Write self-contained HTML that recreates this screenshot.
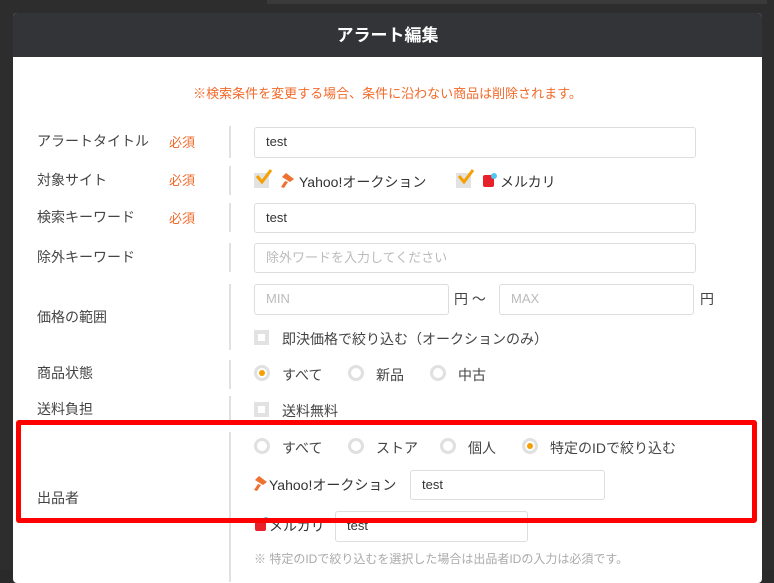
<html><head><style>
body{margin:0;width:774px;height:570px;overflow:hidden;background:#2a2a2a;font-family:"Liberation Sans","Noto Sans CJK JP",sans-serif;position:relative;font-size:14px;color:#444}
.a{position:absolute}
.m{left:13px;top:13px;width:749px;height:570px;background:#fff;border-radius:4px;overflow:hidden}
.h{left:0;top:0;width:749px;height:44px;background:#333438;color:#fff;font-weight:bold;font-size:17px;text-align:center;line-height:46px}
.l{left:24px;line-height:16px}
.r{left:156px;color:#f26a2a;font-size:13px}
.v{left:216px;width:2px;background:#e0e0e0}
.i{border:1px solid #ddd;border-radius:3px;height:29px;box-sizing:border-box;line-height:27px;padding-left:11px;font-size:13px;color:#333}
.ph{color:#bbb}
.cb{width:15px;height:15px;background:#e2e2e2;box-sizing:border-box;border:2px solid #e2e2e2}
.cb::after{content:"";position:absolute;left:2px;top:2px;width:7px;height:7px;background:#fff}
.ck{width:15px;height:15px;background:#e2e2e2}
.rd{width:16px;height:16px;border:3px solid #e0e0e0;border-radius:50%;box-sizing:border-box;background:#fff}
.on::after{content:"";position:absolute;left:2px;top:2px;width:6px;height:6px;border-radius:50%;background:#f5a000}
</style></head><body>
<div class="a" style="left:0;top:0;width:774px;height:570px;background:#2d2d2d"></div>
<div class="a" style="left:267px;top:0;width:500px;height:4px;background:#3a3a3a"></div>
<div class="a m">
<div class="a h">アラート編集</div>
<div class="a" style="left:0;top:70px;width:749px;text-align:center;color:#f26a2a;font-size:13px">※検索条件を変更する場合、条件に沿わない商品は削除されます。</div>

<div class="a l" style="top:120px">アラートタイトル</div><div class="a r" style="top:119px">必須</div>
<div class="a v" style="top:113px;height:32px"></div>
<div class="a i" style="left:241px;top:114px;width:442px;height:31px">test</div>

<div class="a l" style="top:159px">対象サイト</div><div class="a r" style="top:157px">必須</div>
<div class="a v" style="top:153px;height:29px"></div>
<div class="a ck" style="left:241px;top:160px"></div>
<svg class="a" style="left:241px;top:155px" width="20" height="20"><path d="M3 8 L8 14 L17 2" stroke="#f5a000" stroke-width="3" fill="none"/></svg>
<svg class="a" style="left:268px;top:160px" width="14" height="15"><path d="M5 0 L13 6 L9 9 L1 4Z M4 8 L0 14 L3 15 L7 9Z" fill="#f07030"/></svg>
<div class="a" style="left:286px;top:159px;color:#333">Yahoo!オークション</div>
<div class="a ck" style="left:443px;top:160px"></div>
<svg class="a" style="left:443px;top:155px" width="20" height="20"><path d="M3 8 L8 14 L17 2" stroke="#f5a000" stroke-width="3" fill="none"/></svg>
<svg class="a" style="left:469px;top:159px" width="16" height="16"><rect x="1" y="3" width="11" height="12" rx="2" fill="#e8202a"/><circle cx="12" cy="4" r="3" fill="#4ac8f0"/></svg>
<div class="a" style="left:487px;top:159px;color:#333">メルカリ</div>

<div class="a l" style="top:196px">検索キーワード</div><div class="a r" style="top:195px">必須</div>
<div class="a v" style="top:190px;height:29px"></div>
<div class="a i" style="left:241px;top:190px;width:442px;height:30px">test</div>

<div class="a l" style="top:236px">除外キーワード</div>
<div class="a v" style="top:230px;height:29px"></div>
<div class="a i ph" style="left:241px;top:230px;width:442px;height:30px">除外ワードを入力してください</div>

<div class="a l" style="top:296px">価格の範囲</div>
<div class="a v" style="top:271px;height:66px"></div>
<div class="a i ph" style="left:241px;top:271px;width:195px;height:31px">MIN</div>
<div class="a" style="left:441px;top:276px">円 ～</div>
<div class="a i ph" style="left:486px;top:271px;width:195px;height:31px">MAX</div>
<div class="a" style="left:687px;top:276px">円</div>
<div class="a cb" style="left:241px;top:317px"></div>
<div class="a" style="left:269px;top:316px">即決価格で絞り込む（オークションのみ）</div>

<div class="a l" style="top:352px">商品状態</div>
<div class="a v" style="top:347px;height:29px"></div>
<div class="a rd on" style="left:241px;top:352px"></div><div class="a" style="left:269px;top:352px">すべて</div>
<div class="a rd" style="left:335px;top:352px"></div><div class="a" style="left:363px;top:352px">新品</div>
<div class="a rd" style="left:417px;top:352px"></div><div class="a" style="left:445px;top:352px">中古</div>

<div class="a l" style="top:388px">送料負担</div>
<div class="a v" style="top:383px;height:25px"></div>
<div class="a cb" style="left:241px;top:389px"></div><div class="a" style="left:269px;top:388px">送料無料</div>

<div class="a l" style="top:477px">出品者</div>
<div class="a v" style="top:419px;height:150px"></div>
<div class="a rd" style="left:241px;top:425px"></div><div class="a" style="left:269px;top:425px">すべて</div>
<div class="a rd" style="left:335px;top:425px"></div><div class="a" style="left:363px;top:425px">ストア</div>
<div class="a rd" style="left:427px;top:425px"></div><div class="a" style="left:455px;top:425px">個人</div>
<div class="a rd on" style="left:509px;top:425px"></div><div class="a" style="left:537px;top:425px">特定のIDで絞り込む</div>
<svg class="a" style="left:241px;top:463px" width="14" height="15"><path d="M5 0 L13 6 L9 9 L1 4Z M4 8 L0 14 L3 15 L7 9Z" fill="#f07030"/></svg>
<div class="a" style="left:256px;top:462px;color:#333">Yahoo!オークション</div>
<div class="a i" style="left:397px;top:457px;width:195px;height:30px">test</div>
<svg class="a" style="left:241px;top:503px" width="16" height="16"><rect x="1" y="3" width="11" height="12" rx="2" fill="#e8202a"/><circle cx="12" cy="4" r="3" fill="#4ac8f0"/></svg>
<div class="a" style="left:256px;top:503px;color:#333">メルカリ</div>
<div class="a i" style="left:322px;top:498px;width:193px;height:31px">test</div>
<div class="a" style="left:241px;top:537px;font-size:12px;color:#aaa">※ 特定のIDで絞り込むを選択した場合は出品者IDの入力は必須です。</div>
</div>
<div class="a" style="left:16px;top:420px;width:741px;height:103px;border:5px solid #ff0000;border-radius:3px;box-sizing:border-box"></div>
</body></html>
